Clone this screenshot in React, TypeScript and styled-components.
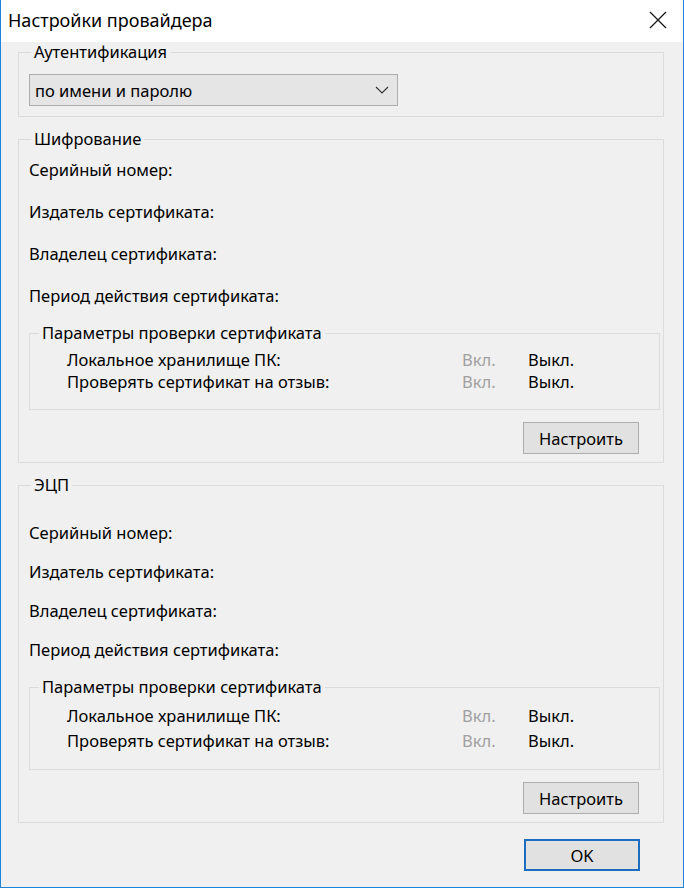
import styled, { createGlobalStyle } from 'styled-components';

const GlobalStyle = createGlobalStyle`
  html, body {
    margin: 0;
    padding: 0;
    background: #f0f0f0;
  }
  * {
    box-sizing: border-box;
  }
`;

type Cert = {
  title: string;
  topPad: number;
  rowGap: number;
  checkHeight: number;
};

const certGroups: Cert[] = [
  { title: 'Шифрование', topPad: 11, rowGap: 22, checkHeight: 22 },
  { title: 'ЭЦП', topPad: 28, rowGap: 19, checkHeight: 25 },
];

const checks = ['Локальное хранилище ПК:', 'Проверять сертификат на отзыв:'];

const labels = [
  'Серийный номер:',
  'Издатель сертификата:',
  'Владелец сертификата:',
  'Период действия сертификата:',
];

function CloseIcon() {
  return (
    <svg width='18' height='18' viewBox='0 0 18 18'>
      <path d='M1 1 L17 17 M17 1 L1 17' stroke='#1a1a1a' strokeWidth='1.3' fill='none' />
    </svg>
  );
}

function Chevron() {
  return (
    <svg width='14' height='8' viewBox='0 0 14 8'>
      <path d='M1 1 L7 7 L13 1' stroke='#333' strokeWidth='1.1' fill='none' />
    </svg>
  );
}

function CertificateGroup({ title, topPad, rowGap, checkHeight }: Cert) {
  return (
    <Group $bottomPad={8}>
      <Legend>{title}</Legend>
      <LabelList $topPad={topPad} $gap={rowGap}>
        {labels.map((l) => (
          <Label key={l}>{l}</Label>
        ))}
      </LabelList>
      <InnerGroup>
        <Legend $inner>Параметры проверки сертификата</Legend>
        <CheckGrid>
          {checks.map((c) => (
            <CheckRow key={c} $height={checkHeight}>
              <span>{c}</span>
              <Off>Вкл.</Off>
              <span>Выкл.</span>
            </CheckRow>
          ))}
        </CheckGrid>
      </InnerGroup>
      <ButtonRow $top={12}>
        <Button>Настроить</Button>
      </ButtonRow>
    </Group>
  );
}

export default function App() {
  return (
    <>
      <GlobalStyle />
      <Window>
        <TitleBar>
          <Title>Настройки провайдера</Title>
          <CloseButton>
            <CloseIcon />
          </CloseButton>
        </TitleBar>
        <Body>
          <Group $bottomPad={10}>
            <Legend>Аутентификация</Legend>
            <Select>
              <span>по имени и паролю</span>
              <Chevron />
            </Select>
          </Group>
          {certGroups.map((g) => (
            <CertificateGroup key={g.title} {...g} />
          ))}
          <ButtonRow $top={4}>
            <Button $primary>OK</Button>
          </ButtonRow>
        </Body>
      </Window>
    </>
  );
}

const Window = styled.div`
  width: 684px;
  height: 888px;
  display: flex;
  flex-direction: column;
  background: #f0f0f0;
  border: 1px solid #1e84d8;
  border-top: none;
  font-family: 'Noto Sans', 'Open Sans', sans-serif;
  font-size: 16.5px;
  color: #000;
`;

const TitleBar = styled.div`
  height: 42px;
  background: #fff;
  display: flex;
  align-items: center;
  justify-content: space-between;
  padding: 0 16px 0 7px;
`;

const Title = styled.div`
  font-size: 18px;
  margin-top: -2px;
`;

const CloseButton = styled.div`
  display: flex;
  align-items: center;
  margin-top: -2px;
`;

const Body = styled.div`
  display: flex;
  flex-direction: column;
  gap: 12px;
  padding: 0 19px 0 17px;
`;

const Group = styled.fieldset<{ $bottomPad: number }>`
  margin: 0;
  min-width: 0;
  border: 1px solid #dcdcdc;
  padding: 0 0 ${(p) => p.$bottomPad}px 10px;
`;

const Legend = styled.legend<{ $inner?: boolean }>`
  margin-left: ${(p) => (p.$inner ? 9 : 2)}px;
  padding: 0 3px;
  line-height: 20px;
`;

const Select = styled.div`
  margin-top: 12px;
  width: 369px;
  height: 32px;
  display: flex;
  align-items: center;
  justify-content: space-between;
  padding: 0 8px 0 5px;
  background: #e5e5e5;
  border: 1px solid #acacac;
`;

const LabelList = styled.div<{ $topPad: number; $gap: number }>`
  display: flex;
  flex-direction: column;
  gap: ${(p) => p.$gap}px;
  padding-top: ${(p) => p.$topPad}px;
  margin-bottom: 17px;
`;

const Label = styled.div`
  line-height: 20px;
`;

const InnerGroup = styled.fieldset`
  margin: 0 3px 0 0;
  min-width: 0;
  border: 1px solid #dcdcdc;
  padding: 6px 0 16px 0;
`;

const CheckGrid = styled.div`
  display: flex;
  flex-direction: column;
  padding-left: 37px;
`;

const CheckRow = styled.div<{ $height: number }>`
  display: grid;
  grid-template-columns: 395px 66px auto;
  line-height: ${(p) => p.$height}px;
`;

const Off = styled.span`
  color: #a0a0a0;
`;

const ButtonRow = styled.div<{ $top: number }>`
  display: flex;
  justify-content: flex-end;
  padding-right: 24px;
  margin-top: ${(p) => p.$top}px;
`;

const Button = styled.div<{ $primary?: boolean }>`
  width: 116px;
  height: 32px;
  display: flex;
  align-items: center;
  justify-content: center;
  background: #e1e1e1;
  border: ${(p) => (p.$primary ? '2px solid #1c6cc0' : '1px solid #adadad')};
`;
